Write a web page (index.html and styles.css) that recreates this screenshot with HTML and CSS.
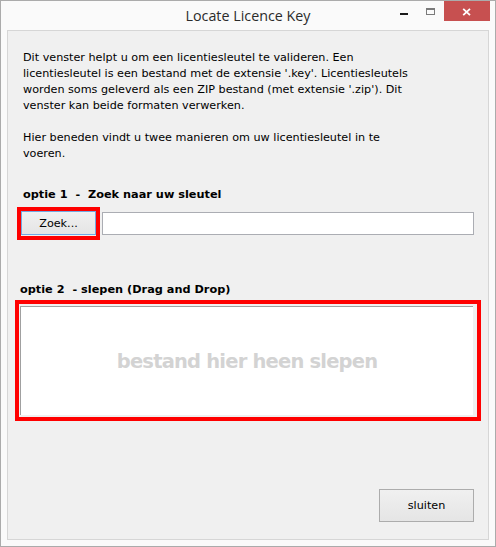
FILE: index.html
```html
<!DOCTYPE html>
<html lang="nl">
<head>
<meta charset="utf-8">
<title>Locate Licence Key</title>
<link rel="stylesheet" href="styles.css">
</head>
<body>
<div class="window">
  <div class="titlebar">
    <div class="spacer"></div>
    <div class="title">Locate Licence Key</div>
    <div class="controls">
      <span class="ctl min"><span class="dash"></span></span>
      <span class="ctl max"><span class="box"></span></span>
      <span class="ctl close">
        <svg width="46" height="20" viewBox="0 0 46 20"><path d="M19.2 7.8 L26 14.2 M26 7.8 L19.2 14.2" stroke="#fff" stroke-width="1.8" fill="none"/></svg>
      </span>
    </div>
  </div>
  <div class="client">
    <p class="intro">Dit venster helpt u om een licentiesleutel te valideren. Een<br>licentiesleutel is een bestand met de extensie '.key'. Licentiesleutels<br>worden soms geleverd als een ZIP bestand (met extensie '.zip'). Dit<br>venster kan beide formaten verwerken.<br><br>Hier beneden vindt u twee manieren om uw licentiesleutel in te<br>voeren.</p>
    <div class="heading opt1">optie 1  -  Zoek naar uw sleutel</div>
    <div class="row">
      <div class="highlight zoekbox"><button class="btn zoek">Zoek...</button></div>
      <input class="path" type="text">
    </div>
    <div class="heading opt2">optie 2  - slepen (Drag and Drop)</div>
    <div class="highlight drop">
      <div class="dropzone">bestand hier heen slepen</div>
    </div>
    <div class="footer"><button class="btn sluiten">sluiten</button></div>
  </div>
</div>
</body>
</html>
```
FILE: styles.css
```css
* { box-sizing: border-box; }
html, body { margin: 0; padding: 0; background: #fafafa; }
.window {
  width: 496px;
  height: 547px;
  border: 1px solid #ababab;
  background: #fafafa;
  display: flex;
  flex-direction: column;
}
.titlebar {
  height: 29px;
  display: grid;
  grid-template-columns: 1fr auto 1fr;
  align-items: start;
}
.title {
  font-family: "Open Sans", "Noto Sans", sans-serif;
  font-size: 14.3px;
  color: #2b2b2b;
  line-height: 28px;
  padding-top: 1px;
  white-space: nowrap;
}
.controls {
  justify-self: end;
  display: flex;
  margin-right: 5px;
}
.ctl { display: block; height: 20px; width: 26px; position: relative; }
.min .dash {
  display: block;
  width: 8px; height: 2px;
  background: #1a1a1a;
  margin: 12px 0 0 8px;
}
.max .box {
  display: block;
  width: 9px; height: 7px;
  border: 1px solid #7a7a7a;
  border-top-width: 2px;
  margin: 7px 0 0 8px;
}
.close { width: 46px; background: #c75050; }
.close svg { display: block; }
.client {
  flex: 1;
  margin: 0 6px 6px 6px;
  border: 1px solid #d6d6d6;
  background: #f0f0f0;
  display: flex;
  flex-direction: column;
  font-family: "DejaVu Sans", sans-serif;
  font-size: 11.2px;
  color: #000;
}
.intro {
  margin: 19px 0 0 0;
  padding-left: 15px;
  line-height: 16px;
  white-space: nowrap;
}
.heading {
  font-weight: bold;
  font-size: 11.3px;
  line-height: 16px;
  white-space: pre;
}
.opt1 { margin-top: 25px; padding-left: 15px; }
.row {
  display: flex;
  align-items: flex-start;
  margin-top: 4px;
  padding-left: 9px;
}
.highlight { border: 4px solid #ff0000; }
.zoekbox { width: 83px; height: 33px; }
.btn {
  font-family: "DejaVu Sans", sans-serif;
  font-size: 11.2px;
  color: #000;
  background: linear-gradient(#f0f0f0, #e5e5e5);
  border: 1px solid #acacac;
  padding: 0;
  margin: 0;
}
.zoek {
  display: block;
  width: 75px;
  height: 24px;
  border-color: #72a9e3;
}
.path {
  margin: 5px 0 0 2px;
  width: 372px;
  height: 23px;
  border: 1px solid #abadb3;
  background: #fff;
  padding: 0;
}
.opt2 { margin-top: 42px; padding-left: 12px; }
.drop {
  margin: 2px 0 0 7px;
  width: 466px;
  height: 121px;
  display: flex;
}
.dropzone {
  flex: 1;
  margin: 2px 4px 2px 1px;
  background: #fff;
  border-top: 1px solid #a0a0a0;
  border-left: 1px solid #a0a0a0;
  display: flex;
  align-items: center;
  justify-content: center;
  font-weight: bold;
  font-size: 19.5px;
  letter-spacing: -0.8px;
  color: #d3d3d3;
  white-space: nowrap;
}
.footer {
  margin-top: auto;
  display: flex;
  justify-content: flex-end;
  padding: 0 14px 17px 0;
}
.sluiten { width: 95px; height: 33px; }
```
